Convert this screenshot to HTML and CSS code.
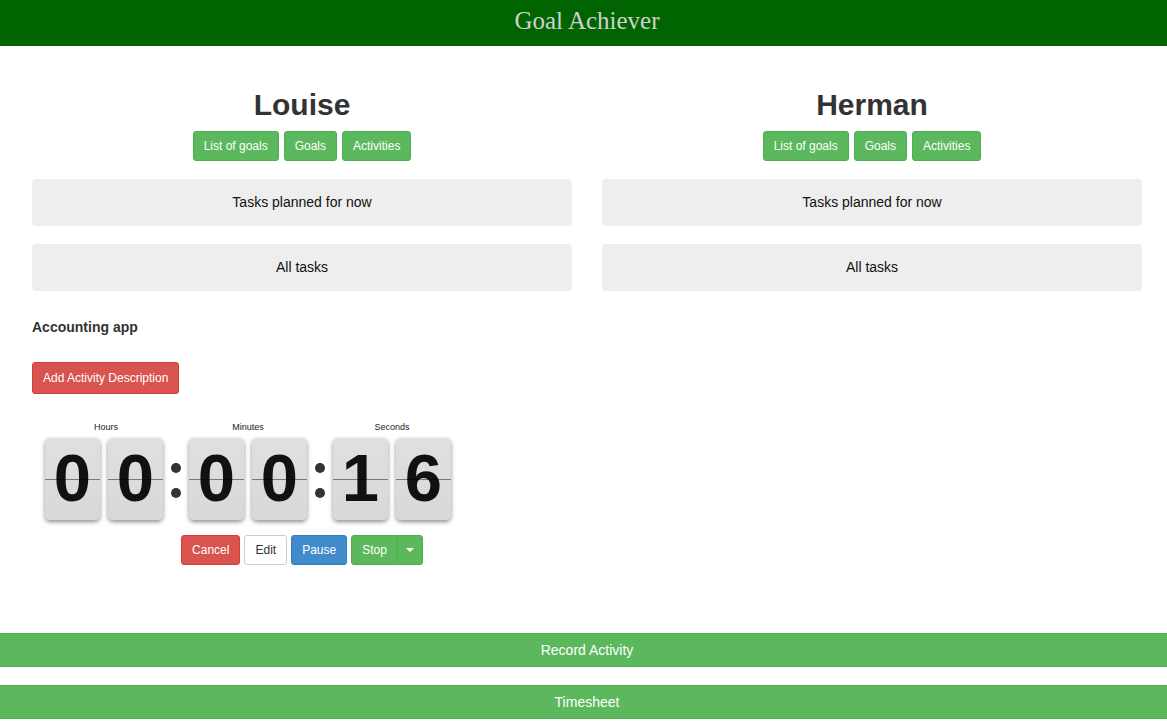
FILE: index.html
```html
<!DOCTYPE html>
<html>
<head>
<meta charset="utf-8">
<link rel="stylesheet" href="styles.css">
</head>
<body>
<header class="topbar">Goal Achiever</header>
<main class="people">
  <section class="person">
    <h1 class="name">Louise</h1>
    <div class="btn-row">
      <button class="btn btn-success">List of goals</button>
      <button class="btn btn-success">Goals</button>
      <button class="btn btn-success">Activities</button>
    </div>
    <div class="well">Tasks planned for now</div>
    <div class="well">All tasks</div>
    <h4 class="goal">Accounting app</h4>
    <button class="btn btn-danger add-desc">Add Activity Description</button>
    <div class="timer">
      <div class="labels">
        <span class="lbl">Hours</span>
        <span class="lbl">Minutes</span>
        <span class="lbl">Seconds</span>
      </div>
      <div class="digits">
        <div class="card">0</div>
        <div class="card">0</div>
        <div class="colon"><i></i><i></i></div>
        <div class="card">0</div>
        <div class="card">0</div>
        <div class="colon"><i></i><i></i></div>
        <div class="card">1</div>
        <div class="card">6</div>
      </div>
    </div>
    <div class="ctrl-row">
      <button class="btn btn-danger">Cancel</button>
      <button class="btn btn-default">Edit</button>
      <button class="btn btn-primary">Pause</button>
      <div class="split">
        <button class="btn btn-success stop">Stop</button>
        <button class="btn btn-success caret-btn"><span class="caret"></span></button>
      </div>
    </div>
  </section>
  <section class="person">
    <h1 class="name">Herman</h1>
    <div class="btn-row">
      <button class="btn btn-success">List of goals</button>
      <button class="btn btn-success">Goals</button>
      <button class="btn btn-success">Activities</button>
    </div>
    <div class="well">Tasks planned for now</div>
    <div class="well">All tasks</div>
  </section>
</main>
<div class="bar">Record Activity</div>
<div class="bar bar2">Timesheet</div>
</body>
</html>
```

FILE: styles.css
```css
* { box-sizing: border-box; }
html, body { margin: 0; padding: 0; }
body {
  font-family: "Liberation Sans", Arial, sans-serif;
  font-size: 14px;
  color: #333;
  background: #fff;
  width: 1167px;
  height: 725px;
  overflow: hidden;
}
.topbar {
  height: 46px;
  background: #006400;
  color: #d0d0d0;
  font-family: "Liberation Serif", "Times New Roman", serif;
  font-size: 25px;
  text-align: center;
  line-height: 42px;
  padding-left: 7px;
}
.people {
  display: flex;
  gap: 30px;
  padding: 0 25px 0 32px;
  height: 587px;
}
.person {
  width: 540px;
  display: flex;
  flex-direction: column;
}
.name {
  margin: 40px 0 0;
  font-size: 30px;
  font-weight: bold;
  text-align: center;
  line-height: 38px;
  color: #333;
}
.btn-row {
  display: flex;
  justify-content: center;
  gap: 5px;
  margin-top: 7px;
}
.btn {
  font-family: "Liberation Sans", Arial, sans-serif;
  font-size: 12px;
  line-height: 18px;
  padding: 5px 10px;
  border: 1px solid transparent;
  border-radius: 3px;
  color: #fff;
  cursor: pointer;
}
.btn-success { background: #5cb85c; border-color: #4cae4c; }
.btn-danger { background: #d9534f; border-color: #d43f3a; }
.btn-primary { background: #428bca; border-color: #357ebd; }
.btn-default { background: #fff; border-color: #ccc; color: #333; }
.well {
  margin-top: 18px;
  height: 47px;
  background: #eee;
  border-radius: 4px;
  display: flex;
  align-items: center;
  justify-content: center;
  color: #111;
  font-size: 14px;
  padding-bottom: 1px;
}
.goal {
  margin: 28px 0 0;
  font-size: 14px;
  font-weight: bold;
  line-height: 16px;
}
.add-desc {
  align-self: flex-start;
  margin-top: 27px;
  padding: 6px 10px;
}
.timer {
  margin-top: 27px;
  width: 430px;
  padding-left: 13px;
}
.labels {
  display: flex;
  font-size: 9px;
  color: #222;
  height: 12px;
  line-height: 12px;
}
.lbl { text-align: center; }
.lbl:nth-child(1) { width: 122px; }
.lbl:nth-child(2) { width: 162px; }
.lbl:nth-child(3) { width: 126px; }
.digits {
  display: flex;
  margin-top: 5px;
  height: 86px;
}
.card {
  position: relative;
  width: 55px;
  height: 82px;
  border-radius: 5px;
  background: linear-gradient(#e0e0e0, #d8d8d8);
  box-shadow: 0 2px 4px rgba(0,0,0,0.45);
  font-family: "Liberation Sans", Arial, sans-serif;
  font-weight: bold;
  font-size: 67px;
  color: #111;
  text-align: center;
  line-height: 80px;
  margin-right: 8px;
}
.card::after {
  content: "";
  position: absolute;
  left: 0;
  right: 0;
  top: 41px;
  height: 1px;
  background: rgba(0,0,0,0.45);
}
.colon {
  width: 26px;
  margin-left: -8px;
  height: 82px;
  display: flex;
  flex-direction: column;
  align-items: center;
  justify-content: center;
  gap: 15px;
  padding-top: 2px;
}
.colon i {
  width: 10px;
  height: 10px;
  border-radius: 50%;
  background: #333;
}
.ctrl-row {
  display: flex;
  justify-content: center;
  gap: 4px;
  margin-top: 11px;
}
.ctrl-row .btn { height: 30px; }
.split { display: flex; }
.stop { border-radius: 3px 0 0 3px; }
.caret-btn {
  border-radius: 0 3px 3px 0;
  margin-left: -1px;
  padding: 5px 8px;
  width: 26px;
  display: flex;
  align-items: center;
  justify-content: center;
}
.caret {
  display: inline-block;
  width: 0;
  height: 0;
  border-top: 4px solid #fff;
  border-left: 4px solid transparent;
  border-right: 4px solid transparent;
}
.bar {
  height: 34px;
  background: #5cb85c;
  border-top: 1px solid #4cae4c;
  border-bottom: 1px solid #4cae4c;
  color: #fff;
  font-size: 14px;
  text-align: center;
  line-height: 32px;
  padding-left: 7px;
}
.bar2 { margin-top: 18px; }
```
